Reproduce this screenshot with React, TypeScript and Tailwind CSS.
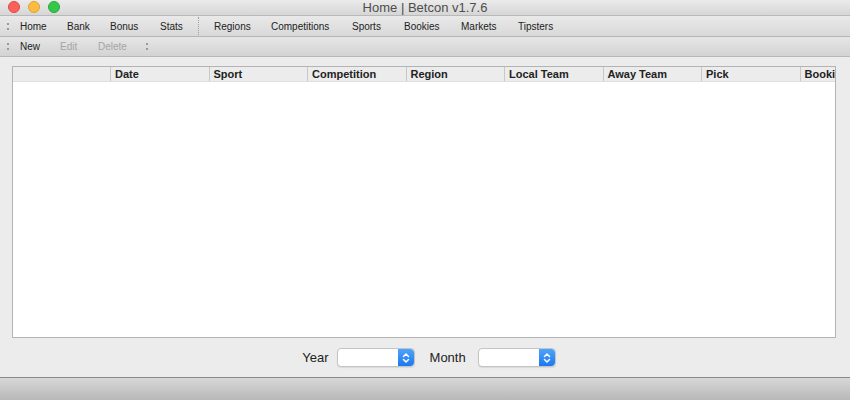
import React from 'react';

const COLUMNS = ['Date', 'Sport', 'Competition', 'Region', 'Local Team', 'Away Team', 'Pick', 'Bookies'];

const Grip: React.FC = () => (
  <div className="flex flex-col gap-[3px] px-[3px]">
    <span className="w-[2px] h-[2px] bg-[#9a9a9a]" />
    <span className="w-[2px] h-[2px] bg-[#9a9a9a]" />
  </div>
);

const Stepper: React.FC = () => (
  <div className="w-[16px] h-full bg-gradient-to-b from-[#4da3fb] to-[#1a78f0] rounded-r-[4px] flex items-center justify-center">
    <svg width="8" height="12" viewBox="0 0 8 12" fill="none" stroke="white" strokeWidth="1.5" strokeLinecap="round" strokeLinejoin="round">
      <path d="M1.5 4.5 L4 2 L6.5 4.5" />
      <path d="M1.5 7.5 L4 10 L6.5 7.5" />
    </svg>
  </div>
);

const Select: React.FC = () => (
  <div className="w-[78px] h-[19px] flex bg-white border border-[#c4c4c4] rounded-[4px] shadow-[0_1px_1px_rgba(0,0,0,0.08)]">
    <div className="flex-1" />
    <Stepper />
  </div>
);

export default function App() {
  return (
    <div className="w-[850px] h-[400px] flex flex-col bg-[#ececec] font-['Liberation_Sans',Arial,sans-serif] overflow-hidden">
      {/* Title bar */}
      <div className="h-[16px] relative flex items-center justify-center bg-gradient-to-b from-[#ebebeb] to-[#d6d6d6] border-b border-[#b9b9b9]">
        <div className="absolute left-[8px] top-[1px] flex gap-[8px]">
          <span className="w-[12px] h-[12px] rounded-full bg-[#fc605b] border border-[#de4a44]" />
          <span className="w-[12px] h-[12px] rounded-full bg-[#fdbc40] border border-[#dea236]" />
          <span className="w-[12px] h-[12px] rounded-full bg-[#34c84a] border border-[#27aa35]" />
        </div>
        <span className="text-[13px] leading-none text-[#4d4d4d]">Home | Betcon v1.7.6</span>
      </div>

      {/* Main toolbar */}
      <div className="h-[21px] flex items-center bg-gradient-to-b from-[#e9e9e9] to-[#d9d9d9] border-b border-[#b5b5b5] text-[10px] text-[#222]">
        <div className="pl-[4px] pr-[8px]"><Grip /></div>
        <div className="flex">
          <span className="w-[47px]">Home</span>
          <span className="w-[43px]">Bank</span>
          <span className="w-[50px]">Bonus</span>
          <span className="w-[38px]">Stats</span>
        </div>
        <div className="h-[18px] border-l border-dotted border-[#a0a0a0] mr-[15px]" />
        <div className="flex">
          <span className="w-[57px]">Regions</span>
          <span className="w-[81px]">Competitions</span>
          <span className="w-[52px]">Sports</span>
          <span className="w-[57px]">Bookies</span>
          <span className="w-[57px]">Markets</span>
          <span className="w-[57px]">Tipsters</span>
        </div>
      </div>

      {/* Action toolbar */}
      <div className="h-[20px] flex items-center bg-gradient-to-b from-[#e6e6e6] to-[#d3d3d3] border-b border-[#b8b8b8] text-[10px]">
        <div className="pl-[4px] pr-[8px]"><Grip /></div>
        <span className="w-[40px] text-[#222]">New</span>
        <span className="w-[38px] text-[#a5a5a5]">Edit</span>
        <span className="w-[45px] text-[#a5a5a5]">Delete</span>
        <Grip />
      </div>

      {/* Content */}
      <div className="flex-1 flex flex-col pl-[12px] pr-[14px] pt-[9px]">
        <div className="h-[272px] bg-white border border-[#b3b3b3] overflow-hidden">
          <div className="h-[15px] flex bg-[#ececec] border-b border-[#e0e0e0] whitespace-nowrap">
            <div className="w-[97px] shrink-0 h-full" />
            {COLUMNS.map(c => (
              <div
                key={c}
                className="w-[98.5px] shrink-0 h-full flex items-center pl-[4px] text-[11px] font-bold text-[#222] border-l border-[#c8c8c8] overflow-hidden"
              >
                {c}
              </div>
            ))}
          </div>
        </div>

        <div className="flex items-center justify-center mt-[10px] pl-[10px] text-[13px] text-[#222]">
          <span className="mr-[8px]">Year</span>
          <Select />
          <span className="ml-[15px] mr-[12px]">Month</span>
          <Select />
        </div>
      </div>

      {/* Status bar */}
      <div className="h-[23px] border-t border-[#8a8a8a] bg-gradient-to-b from-[#d8d8d8] to-[#b8b8b8]" />
    </div>
  );
}
